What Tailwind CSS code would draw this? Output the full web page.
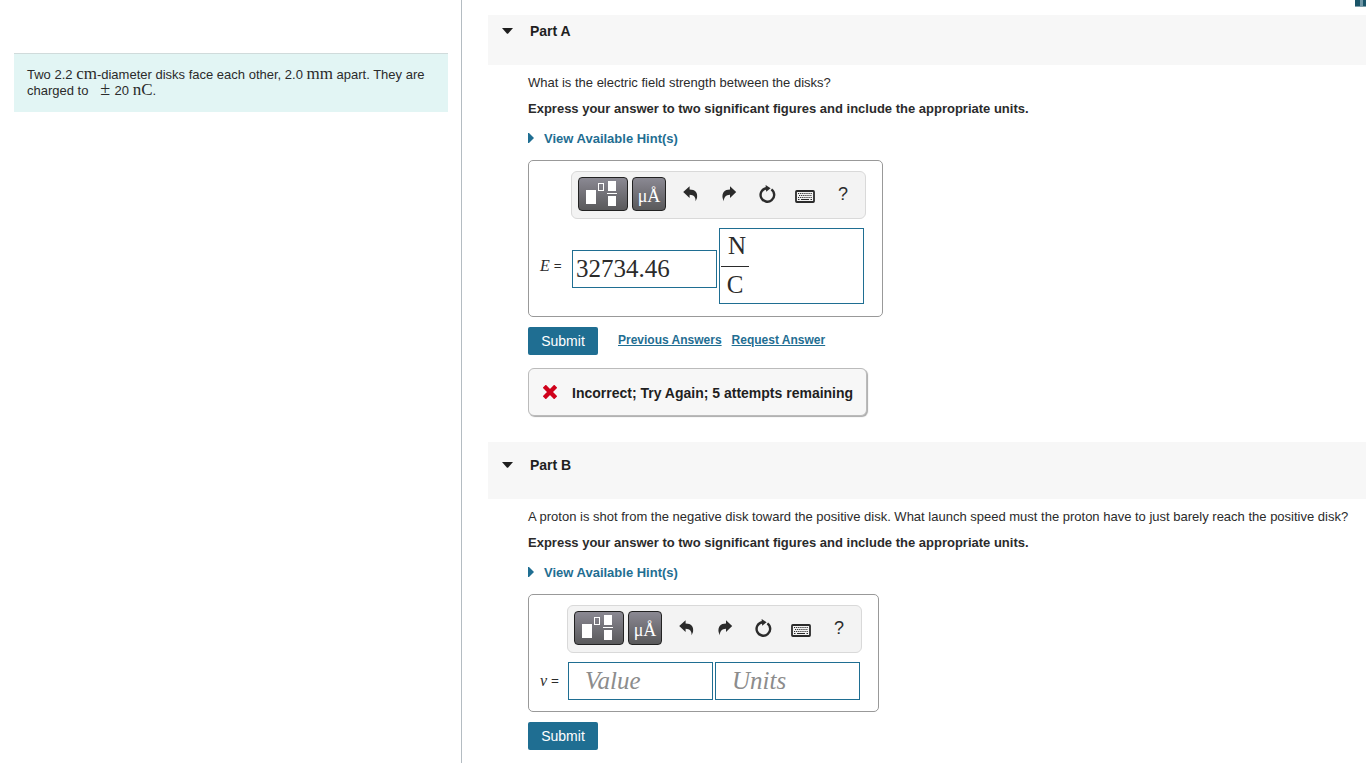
<!DOCTYPE html>
<html lang="en">
<head>
  <meta charset="UTF-8">
  <meta name="viewport" content="width=device-width, initial-scale=1.0">
  <title>Electric Field Between Disks</title>
  <script src="https://cdn.jsdelivr.net/npm/@tailwindcss/browser@4"></script>
</head>
<body class="bg-white text-[#2b2b2b] text-[13px] leading-4 font-['Liberation_Sans',Arial,sans-serif]">
  <!-- Shared icons -->
  <svg class="hidden" aria-hidden="true">
    <symbol id="icon-template" viewBox="0 0 32 28">
      <rect x="0" y="10" width="10" height="14" fill="#fff"/>
      <rect x="12.5" y="3.5" width="5" height="7" fill="none" stroke="#fff"/>
      <rect x="22" y="1" width="8" height="10" fill="#fff"/>
      <rect x="21" y="13" width="10" height="1" fill="#fff"/>
      <rect x="22" y="16" width="8" height="10" fill="#fff"/>
    </symbol>
    <symbol id="icon-undo" viewBox="0 0 16 16">
      <path d="M0.2 6 6.6 0.2V3.4C12.3 3.4 15 6.6 14 12L12.6 15.2C12.8 11.2 11 9 6.6 8.8V12Z" fill="#2b2b2b"/>
    </symbol>
    <symbol id="icon-redo" viewBox="0 0 16 16">
      <path d="M15.2 6 9 0.2V3.4C3.5 3.4 0.8 6.6 1.6 12L2.8 15.2C3 11.2 4.8 9 9 8.8V12Z" fill="#2b2b2b"/>
    </symbol>
    <symbol id="icon-reset" viewBox="0 0 18 18">
      <path d="M13.4 4.4A6.8 6.8 0 1 1 8.2 3.2" fill="none" stroke="#2b2b2b" stroke-width="2.4"/>
      <path d="M7.6 0 12.6 3.2 8.2 6.8Z" fill="#2b2b2b"/>
    </symbol>
    <symbol id="icon-keyboard" viewBox="0 0 20 13">
      <rect x="1" y="1" width="18" height="11" rx="0.8" fill="none" stroke="#2b2b2b" stroke-width="1.8"/>
      <path d="M3 3.5H17M4 5.5H17M3 7.5H17" stroke="#2b2b2b" stroke-width="1" stroke-dasharray="1.2 0.9" fill="none"/>
      <path d="M3 9.5H4.5M6 9.5H14M15.5 9.5H17" stroke="#2b2b2b" stroke-width="1.2" fill="none"/>
    </symbol>
  </svg>

  <div class="absolute top-0 right-0 flex h-[7px] w-[11px] border-b border-[#7f9fab] bg-[#1a5468]" aria-hidden="true">
    <span class="ml-[5px] w-[3px] bg-[#6f97a6]"></span>
  </div>

  <div class="flex min-h-screen">
    <aside class="w-[462px] shrink-0 border-r border-[#b4bcc2] pt-[53px] pr-[13px] pl-[14px]">
      <p class="border-t border-[#d0dbdb] bg-[#e2f5f4] pt-[13px] pr-3 pb-[13px] pl-[13px]">Two 2.2 <span class="font-['Liberation_Serif',serif] text-[17px] leading-3">cm</span>-diameter disks face each other, 2.0 <span class="font-['Liberation_Serif',serif] text-[17px] leading-3">mm</span> apart. They are charged to &nbsp;<span class="font-['Liberation_Serif',serif] text-[18px] leading-3"> ± </span>20 <span class="font-['Liberation_Serif',serif] text-[17px] leading-3">nC</span>.</p>
    </aside>

    <main class="min-w-0 flex-1 pt-[15px] pl-[26px]">
      <!-- Part A -->
      <section>
        <div class="h-[50px] bg-[#f7f7f7] pt-1.5 pl-3.5">
          <button class="flex items-center gap-[17px] font-bold text-sm text-[#1f1f1f]">
            <svg class="h-1.5 w-[11px]" viewBox="0 0 11 6"><path d="M0 0H11L6.2 5.5Q5.5 6 4.8 5.5Z" fill="#1f1f1f"/></svg>
            Part A
          </button>
        </div>
        <div class="pt-2.5 pl-10">
          <p>What is the electric field strength between the disks?</p>
          <p class="mt-2.5 font-bold">Express your answer to two significant figures and include the appropriate units.</p>
          <button class="mt-3.5 flex items-center gap-2.5 font-bold text-[#1f6e92]">
            <svg class="mb-0.5 h-2.5 w-1.5" viewBox="0 0 6 10"><path d="M0 0H1L6 5 1 10H0Z" fill="#1f6e92"/></svg>
            View Available Hint(s)
          </button>

          <div class="mt-[13px] w-fit rounded-[5px] border border-[#999] pt-2.5 pr-4 pb-3 pl-[11px]">
            <div class="ml-[31px] flex h-12 w-[295px] rounded-md border border-[#d9d9d9] bg-[#f3f3f3] pt-[5px] pl-1.5">
              <button aria-label="Templates" class="mr-1 flex h-[34px] w-[50px] items-center rounded border border-[#222] bg-linear-to-b from-[#8b8993] to-[#59595b] pl-[7px]"><svg class="h-7 w-8"><use href="#icon-template"/></svg></button>
              <button aria-label="Symbols" class="mr-2 h-[34px] w-[34px] rounded border border-[#222] bg-linear-to-b from-[#8b8993] to-[#59595b] pt-1 font-['Liberation_Serif',serif] text-lg leading-6 text-white">μÅ</button>
              <button aria-label="Undo" class="mr-1 flex h-[34px] w-[34px] items-center justify-center"><svg class="h-4 w-4"><use href="#icon-undo"/></svg></button>
              <button aria-label="Redo" class="mr-1 flex h-[34px] w-[34px] items-center justify-center"><svg class="h-4 w-4"><use href="#icon-redo"/></svg></button>
              <button aria-label="Reset" class="mr-1 flex h-[34px] w-[34px] items-center justify-center"><svg class="h-[18px] w-[18px]"><use href="#icon-reset"/></svg></button>
              <button aria-label="Keyboard shortcuts" class="mr-1 flex h-[34px] w-[34px] items-center justify-center pt-1"><svg class="h-[13px] w-5"><use href="#icon-keyboard"/></svg></button>
              <button aria-label="Help" class="h-[34px] w-[34px] text-lg leading-[34px]">?</button>
            </div>
            <div class="mt-[9px] flex items-center">
              <label for="value-a" class="w-8 font-['Liberation_Serif',serif] text-base"><i>E</i> <span class="text-sm font-bold">=</span></label>
              <input id="value-a" type="text" value="32734.46" class="mt-1.5 mr-0.5 h-[38px] w-[145px] border border-[#1f6e92] px-[3px] font-['Liberation_Serif',serif] text-[25px]">
              <div role="textbox" aria-label="Units" contenteditable="true" class="h-[76px] w-[145px] border border-[#1f6e92] pl-px font-['Liberation_Serif',serif] text-[25px]">
                <div class="w-7 pt-0.5 text-center">
                  <div class="h-9 border-b border-[#2b2b2b] pl-1 leading-[30px]">N</div>
                  <div class="leading-9">C</div>
                </div>
              </div>
            </div>
          </div>

          <div class="mt-2.5 flex items-center">
            <button class="h-7 w-[70px] rounded-xs bg-[#1f6e92] text-sm text-white">Submit</button>
            <a href="#" class="mb-0.5 ml-5 text-xs font-bold text-[#1f6e92] underline">Previous Answers</a>
            <a href="#" class="mb-0.5 ml-2.5 text-xs font-bold text-[#1f6e92] underline">Request Answer</a>
          </div>

          <div class="mt-[13px] flex h-12 w-[339px] items-center rounded-md border border-[#bbb] bg-[#f7f7f7] pl-3.5 text-sm font-bold text-[#1f1f1f] shadow-[1px_1px_1px_#aaa]">
            <svg class="mr-[15px] h-3.5 w-3.5" viewBox="0 0 14 14"><path d="M2.8 2.8 11.2 11.2M11.2 2.8 2.8 11.2" stroke="#d0021b" stroke-width="4.4" stroke-linecap="square"/></svg>
            <span class="pt-0.5 whitespace-nowrap">Incorrect; Try Again; 5 attempts remaining</span>
          </div>
        </div>
      </section>

      <!-- Part B -->
      <section class="mt-[26px]">
        <div class="h-[57px] bg-[#f7f7f7] pt-[13px] pl-3.5">
          <button class="flex items-center gap-[17px] font-bold text-sm text-[#1f1f1f]">
            <svg class="h-1.5 w-[11px]" viewBox="0 0 11 6"><path d="M0 0H11L6.2 5.5Q5.5 6 4.8 5.5Z" fill="#1f1f1f"/></svg>
            Part B
          </button>
        </div>
        <div class="pt-2.5 pl-10">
          <p>A proton is shot from the negative disk toward the positive disk. What launch speed must the proton have to just barely reach the positive disk?</p>
          <p class="mt-2.5 font-bold">Express your answer to two significant figures and include the appropriate units.</p>
          <button class="mt-3.5 flex items-center gap-2.5 font-bold text-[#1f6e92]">
            <svg class="mb-0.5 h-2.5 w-1.5" viewBox="0 0 6 10"><path d="M0 0H1L6 5 1 10H0Z" fill="#1f6e92"/></svg>
            View Available Hint(s)
          </button>

          <div class="mt-[13px] w-fit rounded-[5px] border border-[#999] pt-2.5 pr-4 pb-[11px] pl-[11px]">
            <div class="ml-[27px] flex h-12 w-[295px] rounded-md border border-[#d9d9d9] bg-[#f3f3f3] pt-[5px] pl-1.5">
              <button aria-label="Templates" class="mr-1 flex h-[34px] w-[50px] items-center rounded border border-[#222] bg-linear-to-b from-[#8b8993] to-[#59595b] pl-[7px]"><svg class="h-7 w-8"><use href="#icon-template"/></svg></button>
              <button aria-label="Symbols" class="mr-2 h-[34px] w-[34px] rounded border border-[#222] bg-linear-to-b from-[#8b8993] to-[#59595b] pt-1 font-['Liberation_Serif',serif] text-lg leading-6 text-white">μÅ</button>
              <button aria-label="Undo" class="mr-1 flex h-[34px] w-[34px] items-center justify-center"><svg class="h-4 w-4"><use href="#icon-undo"/></svg></button>
              <button aria-label="Redo" class="mr-1 flex h-[34px] w-[34px] items-center justify-center"><svg class="h-4 w-4"><use href="#icon-redo"/></svg></button>
              <button aria-label="Reset" class="mr-1 flex h-[34px] w-[34px] items-center justify-center"><svg class="h-[18px] w-[18px]"><use href="#icon-reset"/></svg></button>
              <button aria-label="Keyboard shortcuts" class="mr-1 flex h-[34px] w-[34px] items-center justify-center pt-1"><svg class="h-[13px] w-5"><use href="#icon-keyboard"/></svg></button>
              <button aria-label="Help" class="h-[34px] w-[34px] text-lg leading-[34px]">?</button>
            </div>
            <div class="mt-[9px] flex items-center">
              <label for="value-b" class="w-7 font-['Liberation_Serif',serif] text-base"><i>v</i> <span class="text-sm font-bold">=</span></label>
              <input id="value-b" type="text" placeholder="Value" class="mr-0.5 h-[38px] w-[145px] border border-[#1f6e92] px-4 font-['Liberation_Serif',serif] text-[25px] placeholder:text-[#8c8c8c] placeholder:italic">
              <input type="text" aria-label="Units" placeholder="Units" class="h-[38px] w-[145px] border border-[#1f6e92] px-4 font-['Liberation_Serif',serif] text-[25px] placeholder:text-[#8c8c8c] placeholder:italic">
            </div>
          </div>

          <button class="mt-2.5 h-7 w-[70px] rounded-xs bg-[#1f6e92] text-sm text-white">Submit</button>
        </div>
      </section>
    </main>
  </div>
</body>
</html>
